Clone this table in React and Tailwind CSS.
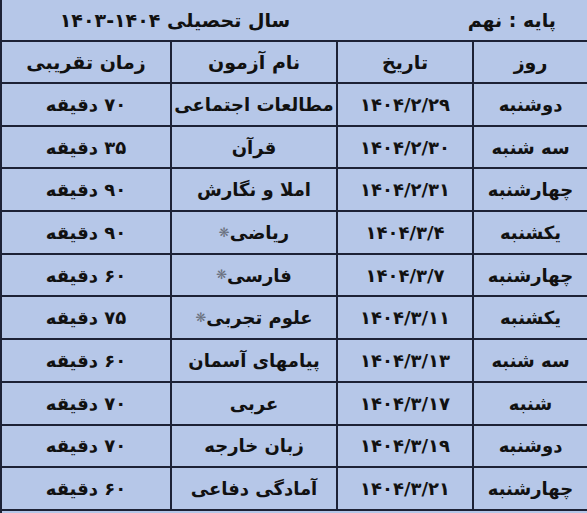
const rows = [
  ['دوشنبه', '۱۴۰۴/۲/۲۹', 'مطالعات اجتماعی', '۷۰ دقیقه'],
  ['سه شنبه', '۱۴۰۴/۲/۳۰', 'قرآن', '۳۵ دقیقه'],
  ['چهارشنبه', '۱۴۰۴/۲/۳۱', 'املا و نگارش', '۹۰ دقیقه'],
  ['یکشنبه', '۱۴۰۴/۳/۴', 'ریاضی', '۹۰ دقیقه', true],
  ['چهارشنبه', '۱۴۰۴/۳/۷', 'فارسی', '۶۰ دقیقه', true],
  ['یکشنبه', '۱۴۰۴/۳/۱۱', 'علوم تجربی ', '۷۵ دقیقه', true],
  ['سه شنبه', '۱۴۰۴/۳/۱۳', 'پیامهای آسمان', '۶۰ دقیقه'],
  ['شنبه', '۱۴۰۴/۳/۱۷', 'عربی', '۷۰ دقیقه'],
  ['دوشنبه', '۱۴۰۴/۳/۱۹', 'زبان خارجه', '۷۰ دقیقه'],
  ['چهارشنبه', '۱۴۰۴/۳/۲۱', 'آمادگی دفاعی', '۶۰ دقیقه'],
]

const cell = 'flex items-center justify-center border-r-2 border-[#1d2236]'

export default function App() {
  return (
    <div className="w-[587px] h-[513px] overflow-hidden bg-[#b6c7e8] border-l-2 border-[#1d2236] text-[#111] font-bold font-['DejaVu_Sans',sans-serif]">
      {/* Title */}
      <div className="h-[42px] flex items-center border-b-2 border-[#1d2236]">
        <div className="w-[346px] text-center text-[19px]" dir="rtl">
          سال تحصیلی <span dir="ltr">۱۴۰۳-۱۴۰۴</span>
        </div>
        <div className="flex-1 text-right pr-[31px] text-[19px]" dir="rtl">
          پایه : نهم
        </div>
      </div>

      {/* Header */}
      <div className="h-[42px] grid grid-cols-[170px_166px_136px_1fr] border-b-2 border-[#1d2236] text-[19px]" dir="rtl-none">
        <div className={cell} dir="rtl">زمان تقریبی</div>
        <div className={cell} dir="rtl">نام آزمون</div>
        <div className={cell} dir="rtl">تاریخ</div>
        <div className="flex items-center justify-center" dir="rtl">روز</div>
      </div>

      {rows.map(([day, date, name, time, star], i) => (
        <div
          key={i}
          className="h-[42.7px] grid grid-cols-[170px_166px_136px_1fr] border-b-2 border-[#1d2236] text-[18px]"
        >
          <div className={cell} dir="rtl">{time}</div>
          <div className={cell} dir="rtl">
            {name}
            {star && <span className="text-[13px] text-[#6b7280] font-normal">❋</span>}
          </div>
          <div className={cell} dir="ltr">{date}</div>
          <div className="flex items-center justify-center" dir="rtl">{day}</div>
        </div>
      ))}
    </div>
  )
}
